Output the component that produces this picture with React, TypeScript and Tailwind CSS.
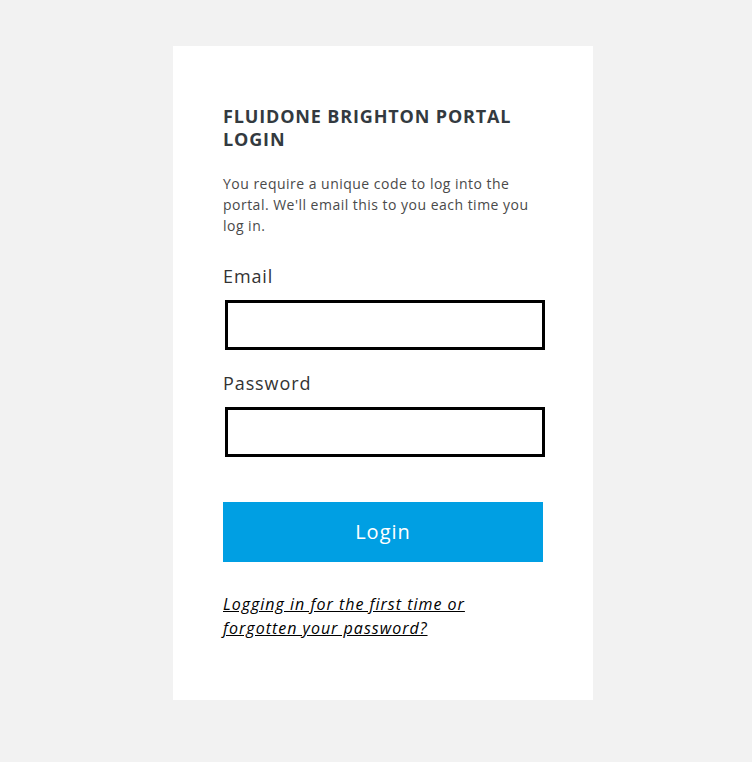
export default function App() {
  return (
    <div className="min-h-screen w-full bg-[#f2f2f2] pt-[46px] font-['Open_Sans',sans-serif]">
      <div className="ml-[173px] w-[420px] bg-white px-[50px] pt-[59px] pb-[60px]">
        <h1 className="text-[18px] leading-[23px] font-bold uppercase tracking-[0.85px] text-[#333a40]">
          Fluidone Brighton Portal Login
        </h1>
        <p className="mt-[22px] text-[14px] leading-[21px] tracking-[0.48px] text-[#4a4a4a]">
          You require a unique code to log into the portal. We'll email this to you each time you log in.
        </p>
        <form className="mt-[28px] flex flex-col" onSubmit={(e) => e.preventDefault()}>
          <label className="text-[18px] leading-[24px] tracking-[0.9px] text-[#333]">Email</label>
          <input
            type="email"
            className="mt-[12px] ml-[2px] h-[50px] w-[320px] border-[3px] border-black bg-white px-2 outline-none"
          />
          <label className="mt-[21px] text-[18px] leading-[24px] tracking-[0.9px] text-[#333]">Password</label>
          <input
            type="password"
            className="mt-[12px] ml-[2px] h-[50px] w-[320px] border-[3px] border-black bg-white px-2 outline-none"
          />
          <button
            type="submit"
            className="mt-[45px] h-[60px] w-[320px] bg-[#009fe3] text-[20px] tracking-[1px] text-white"
          >
            Login
          </button>
        </form>
        <a
          href="#"
          className="mt-[30px] block w-[270px] text-[16px] leading-[24px] tracking-[1px] italic text-black underline"
        >
          Logging in for the first time or forgotten your password?
        </a>
      </div>
    </div>
  );
}
